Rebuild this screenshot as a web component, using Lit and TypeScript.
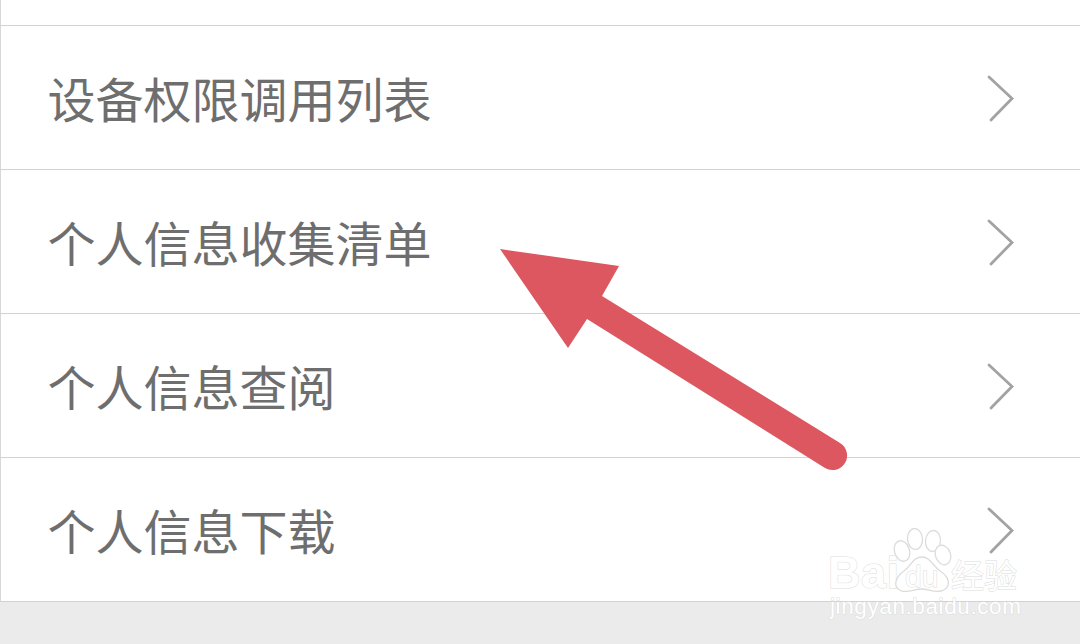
import { LitElement, html, css, svg } from "lit";
import { customElement } from "lit/decorators.js";

const ROWS = ["设备权限调用列表", "个人信息收集清单", "个人信息查阅", "个人信息下载"];

@customElement("app-root")
export class AppRoot extends LitElement {
  static styles = css`
    :host {
      display: block;
      position: relative;
      width: 1080px;
      height: 644px;
      overflow: hidden;
      background: #fff;
      font-family: "Noto Sans CJK SC", "Noto Sans", sans-serif;
    }
    .list {
      display: flex;
      flex-direction: column;
      height: 100%;
      border-left: 1px solid #d8d8d8;
      box-sizing: border-box;
    }
    .top {
      height: 25px;
      flex: none;
      border-bottom: 1px solid #d2d2d2;
      margin-left: -1px;
    }
    .row {
      height: 144px;
      flex: none;
      box-sizing: border-box;
      margin-left: -1px;
      border-bottom: 1px solid #d2d2d2;
      display: flex;
      align-items: center;
      justify-content: space-between;
      padding: 0 60px 0 47.5px;
    }
    .label {
      font-size: 48px;
      line-height: 60px;
      color: #6e6e6e;
      position: relative;
      top: -1px;
    }
    .chev {
      width: 34px;
      height: 52px;
      flex: none;
      display: block;
    }
    .foot {
      flex: 1;
      background: #ebebeb;
      margin-left: -1px;
    }
    .layer {
      position: absolute;
      left: 0;
      top: 0;
      width: 1080px;
      height: 644px;
      pointer-events: none;
    }
    .wt {
      position: absolute;
      color: #fff;
      white-space: nowrap;
      -webkit-text-stroke: 1px #dcdcdc;
      paint-order: stroke;
    }
    .bai {
      left: 828px;
      top: 548px;
      font: 700 45px/50px "Liberation Sans", sans-serif;
      letter-spacing: 0.5px;
    }
    .du {
      left: 905px;
      top: 562px;
      font: 400 30px/30px "Liberation Sans", sans-serif;
    }
    .jy {
      left: 951px;
      top: 554px;
      font: 400 33px/40px "Noto Sans CJK SC", sans-serif;
    }
    .url {
      left: 830px;
      top: 594px;
      font: 400 22.5px/26px "Liberation Sans", sans-serif;
      letter-spacing: 0.6px;
    }
  `;

  private chevron() {
    return svg`<svg class="chev" viewBox="0 0 34 52">
      <path d="M3 5 L26 26.5 L5 48" fill="none" stroke="#a3a3a3" stroke-width="2.8" stroke-linecap="round" stroke-linejoin="miter"/>
    </svg>`;
  }

  render() {
    return html`
      <div class="list">
        <div class="top"></div>
        ${ROWS.map(
          (r) => html`<div class="row"><span class="label">${r}</span>${this.chevron()}</div>`
        )}
        <div class="foot"></div>
      </div>
      <div class="layer">
        <span class="wt bai">Bai</span>
        <svg class="layer" viewBox="0 0 1080 644">
          <g fill="#fff" stroke="#dcdcdc" stroke-width="1.3">
            <ellipse cx="902" cy="551" rx="7.5" ry="10.5" transform="rotate(-18 902 551)"/>
            <ellipse cx="915" cy="539" rx="7.5" ry="10.5" transform="rotate(-5 915 539)"/>
            <ellipse cx="933" cy="541" rx="7.5" ry="10.5" transform="rotate(5 933 541)"/>
            <ellipse cx="943" cy="555" rx="7.5" ry="10" transform="rotate(-20 943 555)"/>
            <path d="M922 557 C930 557 933 566 940 571 C950 577 952 588 941 591 C934 593 928 589 922 589 C914 589 909 593 902 591 C892 588 895 577 904 571 C911 566 913 557 922 557 Z"/>
          </g>
        </svg>
        <span class="wt du">du</span>
        <span class="wt jy">经验</span>
        <span class="wt url">jingyan.baidu.com</span>
      </div>
      <svg class="layer" viewBox="0 0 1080 644">
        <path d="M500 249 L619 266 L602 296 L840 443 A14 14 0 0 1 825 468 L587 319 L568 348 Z" fill="#dc575f"/>
      </svg>
    `;
  }
}
